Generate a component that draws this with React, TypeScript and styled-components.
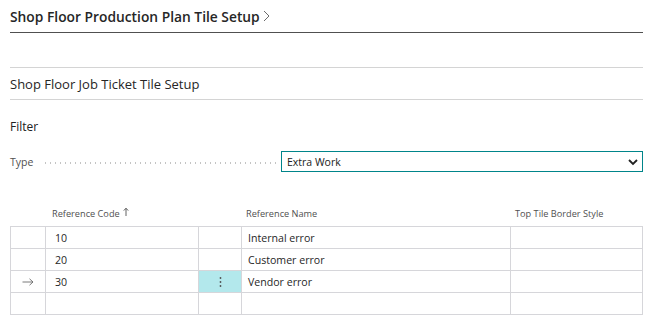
import React from "react";
import styled, { createGlobalStyle } from "styled-components";

const GlobalStyle = createGlobalStyle`
  body {
    margin: 0;
    background: #ffffff;
    font-family: "Segoe UI", "Open Sans", "Liberation Sans", sans-serif;
    color: #212121;
  }
`;

const Page = styled.div`
  width: 633px;
  padding: 0 10px;
`;

const PageHeader = styled.div`
  height: 33px;
  border-bottom: 1px solid #505050;
  display: flex;
  align-items: center;
  box-sizing: border-box;
`;

const PageTitle = styled.h1`
  margin: 0;
  font-size: 13.8px;
  font-weight: 600;
  color: #262626;
  display: flex;
  align-items: center;
  gap: 2px;
`;

const Spacer = styled.div`
  height: 34px;
  border-bottom: 1px solid #d4d4d4;
`;

const SectionHeader = styled.div`
  height: 31px;
  border-bottom: 1px solid #d4d4d4;
  display: flex;
  align-items: center;
`;

const SectionTitle = styled.h2`
  margin: 0;
  font-size: 13px;
  font-weight: 400;
  color: #262626;
`;

const GroupLabel = styled.div`
  margin-top: 18px;
  font-size: 12px;
  font-weight: 400;
  color: #212121;
`;

const FieldRow = styled.div`
  margin-top: 16px;
  display: flex;
  align-items: center;
  height: 21px;
`;

const FieldLabel = styled.span`
  font-size: 10.5px;
  color: #505050;
  white-space: nowrap;
`;

const Leader = styled.span`
  flex: 1;
  height: 2px;
  margin: 0 5px 0 10px;
  background-image: radial-gradient(circle, #c4c4c4 0.6px, transparent 0.8px);
  background-size: 5px 2px;
  background-repeat: repeat-x;
  position: relative;
  top: 1px;
`;

const SelectBox = styled.div`
  width: 362px;
  height: 21px;
  box-sizing: border-box;
  border: 1px solid #00858a;
  display: flex;
  align-items: center;
  justify-content: space-between;
  padding: 0 3px 0 5px;
  font-size: 10.5px;
  color: #212121;
`;

const Table = styled.div`
  margin-top: 35px;
  display: grid;
  grid-template-columns: 36px 153px 43px 269px 132px;
`;

const HeadCell = styled.div<{ $pad?: number }>`
  height: 19px;
  font-size: 9.2px;
  color: #505050;
  padding-left: ${(p) => p.$pad ?? 4}px;
  display: flex;
  align-items: flex-start;
  gap: 3px;
`;

const Cell = styled.div<{ $active?: boolean; $first?: boolean; $pad?: number }>`
  height: 22px;
  box-sizing: border-box;
  border-top: 1px solid #d6d6da;
  border-right: 1px solid #d6d6da;
  border-left: ${(p) => (p.$first ? "1px solid #d6d6da" : "none")};
  background: ${(p) => (p.$active ? "#b3e8ec" : "transparent")};
  font-size: 10.6px;
  color: #262626;
  display: flex;
  align-items: center;
  padding-left: ${(p) => p.$pad ?? 6}px;
`;

const BottomRule = styled.div`
  grid-column: 1 / -1;
  border-top: 1px solid #d6d6da;
`;

const ArrowCell = styled(Cell)`
  justify-content: center;
  padding-left: 0;
  color: #505050;
`;

const DotsCell = styled(Cell)`
  justify-content: center;
  padding-left: 0;
`;

const Chevron = () => (
  <svg width="12" height="12" viewBox="0 0 12 12">
    <path d="M2 4 L6 8 L10 4" fill="none" stroke="#212121" strokeWidth="1.8" />
  </svg>
);

const Breadcrumb = () => (
  <svg width="9" height="14" viewBox="0 0 9 14">
    <path d="M2 2 L7 7 L2 12" fill="none" stroke="#6b6b6b" strokeWidth="1" />
  </svg>
);

const Arrow = () => (
  <svg width="12" height="8" viewBox="0 0 12 8">
    <path d="M0.5 4 H11 M7.5 0.8 L11 4 L7.5 7.2" fill="none" stroke="#6b6b6b" strokeWidth="0.9" />
  </svg>
);

const Dots = () => (
  <svg width="3" height="12" viewBox="0 0 3 12">
    <circle cx="1.5" cy="2" r="0.9" fill="#505050" />
    <circle cx="1.5" cy="6" r="0.9" fill="#505050" />
    <circle cx="1.5" cy="10" r="0.9" fill="#505050" />
  </svg>
);

const SortArrow = () => (
  <svg width="6" height="10" viewBox="0 0 6 10">
    <path d="M3 9 V1.5 M0.8 3.6 L3 1.2 L5.2 3.6" fill="none" stroke="#505050" strokeWidth="0.9" />
  </svg>
);

const rows = [
  { code: "10", name: "Internal error" },
  { code: "20", name: "Customer error" },
  { code: "30", name: "Vendor error", active: true },
  { code: "", name: "" }
];

export default function App() {
  return (
    <Page>
      <GlobalStyle />
      <PageHeader>
        <PageTitle>
          Shop Floor Production Plan Tile Setup
          <Breadcrumb />
        </PageTitle>
      </PageHeader>
      <Spacer />
      <SectionHeader>
        <SectionTitle>Shop Floor Job Ticket Tile Setup</SectionTitle>
      </SectionHeader>
      <GroupLabel>Filter</GroupLabel>
      <FieldRow>
        <FieldLabel>Type</FieldLabel>
        <Leader />
        <SelectBox>
          Extra Work
          <Chevron />
        </SelectBox>
      </FieldRow>
      <Table>
        <HeadCell />
        <HeadCell $pad={6}>
          Reference Code <SortArrow />
        </HeadCell>
        <HeadCell />
        <HeadCell>Reference Name</HeadCell>
        <HeadCell>Top Tile Border Style</HeadCell>
        {rows.map((r, i) => (
          <React.Fragment key={i}>
            <ArrowCell $first>{r.active && <Arrow />}</ArrowCell>
            <Cell $pad={9}>{r.code}</Cell>
            <DotsCell $active={r.active}>{r.active && <Dots />}</DotsCell>
            <Cell>{r.name}</Cell>
            <Cell />
          </React.Fragment>
        ))}
        <BottomRule />
      </Table>
    </Page>
  );
}
